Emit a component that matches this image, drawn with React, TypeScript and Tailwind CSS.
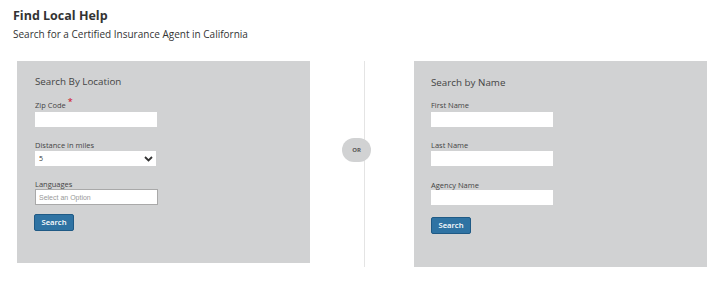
import React from 'react';

const font = {fontFamily: '"Open Sans", "Noto Sans", sans-serif'};

const Label: React.FC<{text: string; required?: boolean; className?: string}> = ({text, required, className}) => (
    <label className={`block text-[7.5px] leading-[10px] text-[#444] ${className ?? ''}`}>
        {text}
        {required && <span className="relative -top-[3px] ml-[2px] text-[9px] text-[#d0021b]">*</span>}
    </label>
);

const TextInput: React.FC<{className?: string}> = ({className}) => (
    <input type="text" className={`block h-[15px] w-[122px] bg-white outline-none ${className ?? ''}`}/>
);

const SearchButton: React.FC<{className?: string}> = ({className}) => (
    <button
        className={`block h-[17px] w-[40px] rounded-[2px] border border-[#1f5a85] bg-[#2f73a3] text-[7.7px] font-semibold leading-none text-white ${className ?? ''}`}>
        Search
    </button>
);

const App: React.FC = () => {
    return (
        <div className="h-[281px] w-[719px] bg-white text-[#333]" style={font}>
            <div className="pl-[13px] pt-[8px]">
                <h1 className="text-[12.5px] font-bold leading-[16px] text-[#333]">Find Local Help</h1>
                <p className="mt-[3px] text-[10px] leading-[14px] text-[#333]">
                    Search for a Certified Insurance Agent in California
                </p>
            </div>

            <div className="mt-[20px] flex items-start">
                {/* Location search */}
                <div className="ml-[17px] h-[202px] w-[293px] bg-[#d1d2d3] pl-[18px] pt-[15px]">
                    <h2 className="text-[9.8px] leading-[12px] text-[#444]">Search By Location</h2>
                    <Label text="Zip Code" required className="mt-[12px]"/>
                    <TextInput className="mt-[2px]"/>

                    <Label text="Distance in miles" className="mt-[13px]"/>
                    <div className="mt-[1px] flex h-[15px] w-[121px] items-center justify-between bg-white pl-[4px] pr-[3px]">
                        <span className="text-[7px] leading-none text-[#333]">5</span>
                        <svg width="9" height="6" viewBox="0 0 9 6" className="text-[#333]">
                            <path d="M1 1 L4.5 4.5 L8 1" fill="none" stroke="currentColor" strokeWidth="1.8"/>
                        </svg>
                    </div>

                    <Label text="Languages" className="mt-[13px]"/>
                    <div className="flex h-[16px] w-[123px] items-center border border-[#a9a9a9] bg-white pl-[3px]">
                        <span className="text-[7px] leading-none text-[#999]"
                              style={{fontFamily: '"Liberation Sans", Arial, sans-serif'}}>Select an Option</span>
                    </div>

                    <SearchButton className="mt-[9px] -ml-[1px]"/>
                </div>

                {/* Divider */}
                <div className="relative h-[206px] w-[104px]">
                    <div className="absolute left-[54px] top-0 h-full w-px bg-[#e4e4e4]"/>
                    <div
                        className="absolute left-[32px] top-[77px] flex h-[24px] w-[29px] items-center justify-center rounded-full bg-[#d1d2d3] text-[6px] font-bold text-[#555]">
                        OR
                    </div>
                </div>

                {/* Name search */}
                <div className="h-[206px] w-[293px] bg-[#d1d2d3] pl-[17px] pt-[16px]">
                    <h2 className="text-[9.8px] leading-[12px] text-[#444]">Search by Name</h2>
                    <Label text="First Name" className="mt-[11px]"/>
                    <TextInput className="mt-[2px]"/>
                    <Label text="Last Name" className="mt-[13px]"/>
                    <TextInput className="mt-[1px]"/>
                    <Label text="Agency Name" className="mt-[14px]"/>
                    <TextInput/>
                    <SearchButton className="mt-[12px]"/>
                </div>
            </div>
        </div>
    );
};

export default App;
